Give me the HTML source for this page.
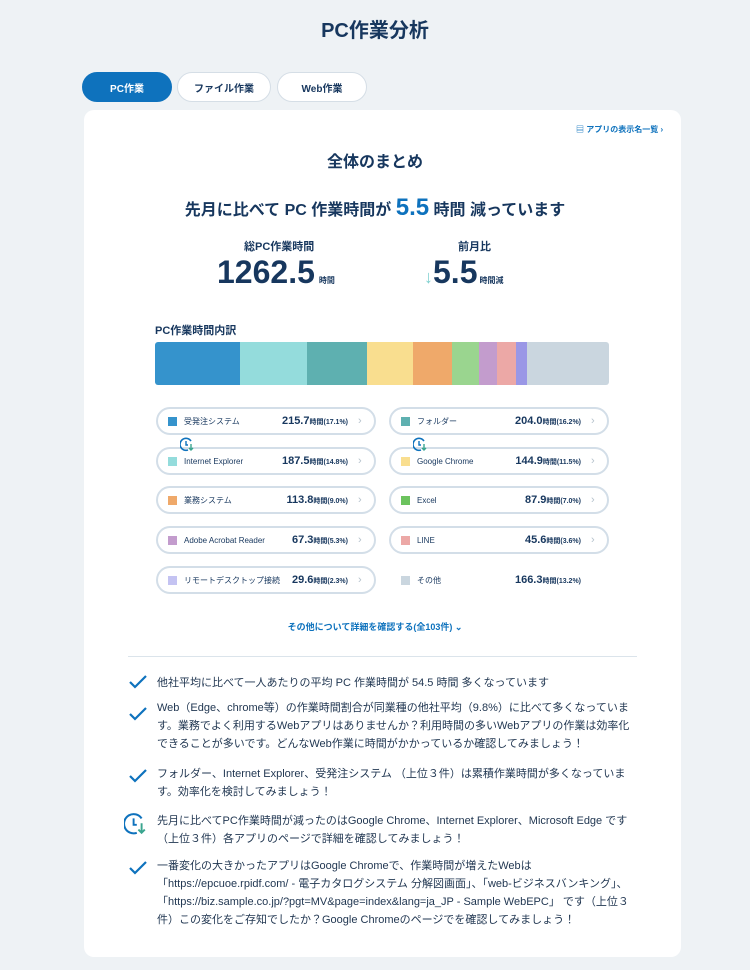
<!DOCTYPE html>
<html><head><meta charset="utf-8"><style>
*{margin:0;padding:0;box-sizing:border-box}
body{width:750px;height:970px;background:#eef2f5;font-family:"Liberation Sans","Noto Sans CJK JP",sans-serif;color:#17375e;position:relative;overflow:hidden}
.abs{position:absolute}
h1{position:absolute;top:14px;width:750px;text-align:center;font-size:20px;font-weight:bold}
.tab{position:absolute;top:72px;height:30px;border-radius:15px;background:#fff;border:1px solid #d5dee6;font-size:10px;font-weight:bold;display:flex;align-items:center;justify-content:center;color:#17375e}
.card{position:absolute;left:84px;top:110px;width:597px;height:847px;background:#fff;border-radius:10px}
.c{position:absolute;width:750px;left:0;text-align:center}
.bar{position:absolute;left:155px;top:342px;width:454px;height:43px;border-radius:3px;overflow:hidden;display:flex}
.pill{position:absolute;width:220px;height:28px;border:2px solid #d3dee8;border-radius:14px;font-size:8px;display:flex;align-items:center;padding-left:10px}
.pill .sw{width:9px;height:9px;margin-right:7px;flex:none}
.pill .n{flex:1;white-space:nowrap}
.pill .v{font-size:11px;font-weight:bold;margin-right:10px;white-space:nowrap}
.pill .v small{font-size:7px}
.pill .ch{color:#b5c2cc;font-size:11px;width:16px}
.b{position:absolute;left:157px;font-size:11px;line-height:18px;width:478px;color:#1f3550}
.ck{position:absolute;left:128px}
</style></head><body>
<h1>PC作業分析</h1>
<div class="tab" style="left:82px;width:90px;background:#0e72bd;color:#fff;border-color:#0e72bd">PC作業</div>
<div class="tab" style="left:177px;width:94px">ファイル作業</div>
<div class="tab" style="left:277px;width:90px">Web作業</div>
<div class="card"></div>
<div class="abs" style="left:576px;top:124px;font-size:8px;color:#0e72bd;font-weight:bold">▤ アプリの表示名一覧 ›</div>
<div class="c" style="top:148px;font-size:16px;font-weight:bold">全体のまとめ</div>
<div class="c" style="top:194px;font-size:16px;font-weight:bold">先月に比べて PC 作業時間が <span style="color:#0e72bd;font-size:24px">5.5</span> 時間 減っています</div>
<div class="abs" style="left:244px;top:238px;font-size:11px;font-weight:bold">総PC作業時間</div>
<div class="abs" style="left:217px;top:254px;font-size:32px;font-weight:bold">1262.5<span style="font-size:8px;margin-left:4px">時間</span></div>
<div class="abs" style="left:458px;top:238px;font-size:11px;font-weight:bold">前月比</div>
<div class="abs" style="left:424px;top:254px;font-size:32px;font-weight:bold"><span style="color:#7fd0cf;font-size:18px">↓</span>5.5<span style="font-size:8px;margin-left:2px">時間減</span></div>
<div class="abs" style="left:155px;top:322px;font-size:11px;font-weight:bold">PC作業時間内訳</div>
<div class="bar">
<div style="width:85px;background:#3593cc"></div><div style="width:67px;background:#94dcdc"></div><div style="width:60px;background:#5eb0b0"></div><div style="width:46px;background:#f9de8f"></div><div style="width:39px;background:#efa96a"></div><div style="width:27px;background:#9ad58f"></div><div style="width:18px;background:#c39ccd"></div><div style="width:19px;background:#eca8a6"></div><div style="width:11px;background:#9a97e6"></div><div style="flex:1;background:#cad6df"></div></div>

<div class="pill" style="left:156px;top:407px"><i class="sw" style="background:#3593cc"></i><span class="n">受発注システム</span><span class="v">215.7<small>時間(17.1%)</small></span><span class="ch">›</span></div>
<div class="pill" style="left:389px;top:407px"><i class="sw" style="background:#5eb0b0"></i><span class="n">フォルダー</span><span class="v">204.0<small>時間(16.2%)</small></span><span class="ch">›</span></div>
<div class="pill" style="left:156px;top:447px"><i class="sw" style="background:#94dcdc"></i><span class="n">Internet Explorer</span><span class="v">187.5<small>時間(14.8%)</small></span><span class="ch">›</span></div>
<div class="pill" style="left:389px;top:447px"><i class="sw" style="background:#f9de8f"></i><span class="n">Google Chrome</span><span class="v">144.9<small>時間(11.5%)</small></span><span class="ch">›</span></div>
<div class="pill" style="left:156px;top:486px"><i class="sw" style="background:#efa96a"></i><span class="n">業務システム</span><span class="v">113.8<small>時間(9.0%)</small></span><span class="ch">›</span></div>
<div class="pill" style="left:389px;top:486px"><i class="sw" style="background:#6cc35e"></i><span class="n">Excel</span><span class="v">87.9<small>時間(7.0%)</small></span><span class="ch">›</span></div>
<div class="pill" style="left:156px;top:526px"><i class="sw" style="background:#c39ccd"></i><span class="n">Adobe Acrobat Reader</span><span class="v">67.3<small>時間(5.3%)</small></span><span class="ch">›</span></div>
<div class="pill" style="left:389px;top:526px"><i class="sw" style="background:#eca8a6"></i><span class="n">LINE</span><span class="v">45.6<small>時間(3.6%)</small></span><span class="ch">›</span></div>
<div class="pill" style="left:156px;top:566px"><i class="sw" style="background:#c4c3f2"></i><span class="n">リモートデスクトップ接続</span><span class="v">29.6<small>時間(2.3%)</small></span><span class="ch">›</span></div>
<div class="pill" style="left:389px;top:566px;border-color:#fff"><i class="sw" style="background:#cad6df"></i><span class="n">その他</span><span class="v">166.3<small>時間(13.2%)</small></span><span class="ch"></span></div>
<svg class="abs" style="left:180px;top:437px" width="15" height="15" viewBox="0 0 15 15"><path d="M11 4A6 6 0 1 0 8 13" fill="none" stroke="#0e72bd" stroke-width="1.6"/><path d="M6 4v4h2" fill="none" stroke="#0e72bd" stroke-width="1.4"/><path d="M11 7v6M9 11l2 2 2-2" fill="none" stroke="#3aa58f" stroke-width="1.4"/></svg>
<svg class="abs" style="left:413px;top:437px" width="15" height="15" viewBox="0 0 15 15"><path d="M11 4A6 6 0 1 0 8 13" fill="none" stroke="#0e72bd" stroke-width="1.6"/><path d="M6 4v4h2" fill="none" stroke="#0e72bd" stroke-width="1.4"/><path d="M11 7v6M9 11l2 2 2-2" fill="none" stroke="#3aa58f" stroke-width="1.4"/></svg>
<div class="c" style="top:620px;font-size:9px;color:#0e72bd;font-weight:bold">その他について詳細を確認する(全103件) ⌄</div>
<div class="abs" style="left:128px;top:656px;width:509px;height:1px;background:#dbe4eb"></div>

<svg class="ck" style="top:674px" width="20" height="16"><path d="M2 8l5 5L18 2" fill="none" stroke="#0e72bd" stroke-width="2.2"/></svg>
<div class="b" style="top:674px">他社平均に比べて一人あたりの平均 PC 作業時間が 54.5 時間 多くなっています</div>
<svg class="ck" style="top:706px" width="20" height="16"><path d="M2 8l5 5L18 2" fill="none" stroke="#0e72bd" stroke-width="2.2"/></svg>
<div class="b" style="top:699px">Web（Edge、chrome等）の作業時間割合が同業種の他社平均（9.8%）に比べて多くなっています。業務でよく利用するWebアプリはありませんか？利用時間の多いWebアプリの作業は効率化できることが多いです。どんなWeb作業に時間がかかっているか確認してみましょう！</div>
<svg class="ck" style="top:768px" width="20" height="16"><path d="M2 8l5 5L18 2" fill="none" stroke="#0e72bd" stroke-width="2.2"/></svg>
<div class="b" style="top:765px">フォルダー、Internet Explorer、受発注システム （上位３件）は累積作業時間が多くなっています。効率化を検討してみましょう！</div>
<svg class="abs" style="left:124px;top:812px" width="24" height="24" viewBox="0 0 15 15"><path d="M11 4A6 6 0 1 0 8 13" fill="none" stroke="#0e72bd" stroke-width="1.3"/><path d="M6 4v4h2" fill="none" stroke="#0e72bd" stroke-width="1.2"/><path d="M11 7v6M9 11l2 2 2-2" fill="none" stroke="#3aa58f" stroke-width="1.2"/></svg>
<div class="b" style="top:812px">先月に比べてPC作業時間が減ったのはGoogle Chrome、Internet Explorer、Microsoft Edge です（上位３件）各アプリのページで詳細を確認してみましょう！</div>
<svg class="ck" style="top:860px" width="20" height="16"><path d="M2 8l5 5L18 2" fill="none" stroke="#0e72bd" stroke-width="2.2"/></svg>
<div class="b" style="top:857px">一番変化の大きかったアプリはGoogle Chromeで、作業時間が増えたWebは「https://epcuoe.rpidf.com/ - 電子カタログシステム 分解図画面」、「web-ビジネスバンキング」、「https://biz.sample.co.jp/?pgt=MV&amp;page=index&amp;lang=ja_JP - Sample WebEPC」 です（上位３件）この変化をご存知でしたか？Google Chromeのページでを確認してみましょう！</div>
</body></html>
